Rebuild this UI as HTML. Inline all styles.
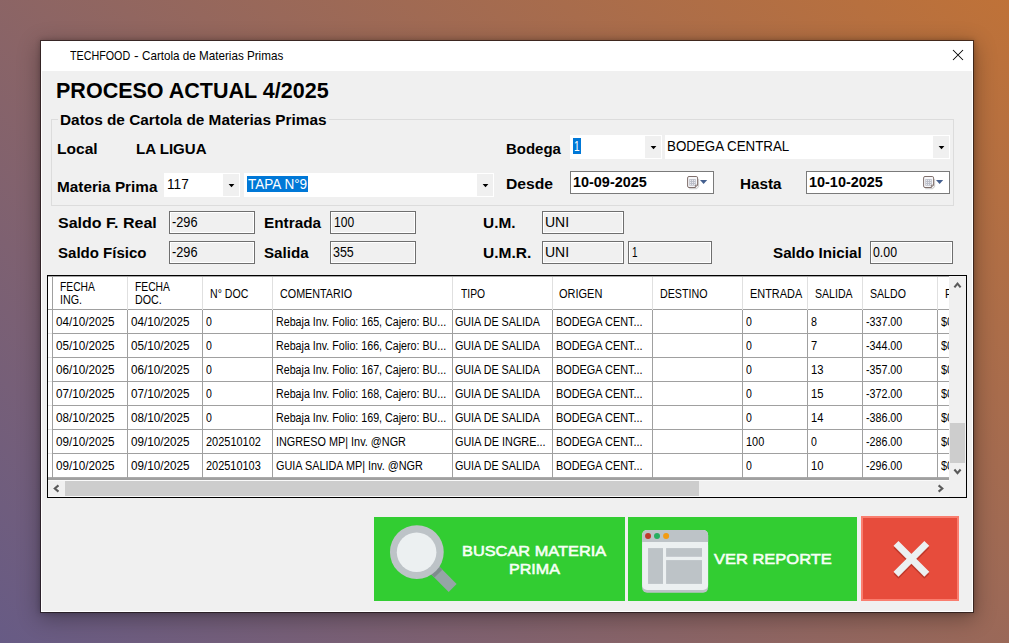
<!DOCTYPE html>
<html><head><meta charset="utf-8"><title>TECHFOOD - Cartola de Materias Primas</title>
<style>
html,body{margin:0;padding:0}
body{width:1009px;height:643px;overflow:hidden;position:relative;font-family:"Liberation Sans", sans-serif;
background:linear-gradient(42deg,#675b85,#bf7238)}
body>div,body>svg,body>span,div>span{position:absolute}
.t{position:absolute;white-space:nowrap;line-height:20px;transform-origin:0 50%;font-family:"Liberation Sans", sans-serif}
</style></head><body>
<div style="left:40px;top:40px;width:934px;height:573px;background:#fff;background-clip:padding-box;box-shadow:0 5px 20px 1px rgba(0,0,0,.30),0 0 5px rgba(0,0,0,.22);border:1px solid rgba(25,15,15,.64);box-sizing:border-box"></div>
<div style="left:42px;top:71px;width:930px;height:540px;background:#f0f0f0"></div>
<svg style="left:952px;top:49px" width="12" height="12" viewBox="0 0 12 12"><path d="M1 1L11 11M11 1L1 11" stroke="#000" stroke-width="1.02" fill="none"/></svg>
<div style="left:51px;top:119px;width:903px;height:87px;border:1px solid #dcdcdc;box-sizing:border-box"></div>
<div style="left:58px;top:112px;width:271px;height:16px;background:#f0f0f0"></div>
<div style="left:164px;top:173px;width:76px;height:24px;background:#fff"></div><div style="left:223px;top:174px;width:16px;height:22px;background:#f0f0f0"></div><svg style="left:223px;top:173px" width="16" height="24" viewBox="0 0 16 24"><path d="M5.6 10.9H11.4L8.5 14.3Z" fill="#000"/></svg>
<div style="left:244px;top:173px;width:250px;height:24px;background:#fff"></div><div style="left:477px;top:174px;width:16px;height:22px;background:#f0f0f0"></div><svg style="left:477px;top:173px" width="16" height="24" viewBox="0 0 16 24"><path d="M5.6 10.9H11.4L8.5 14.3Z" fill="#000"/></svg>
<div style="left:570px;top:135px;width:92px;height:24px;background:#fff"></div><div style="left:645px;top:136px;width:16px;height:22px;background:#f0f0f0"></div><svg style="left:645px;top:135px" width="16" height="24" viewBox="0 0 16 24"><path d="M5.6 10.9H11.4L8.5 14.3Z" fill="#000"/></svg>
<div style="left:665px;top:135px;width:285px;height:24px;background:#fff"></div><div style="left:933px;top:136px;width:16px;height:22px;background:#f0f0f0"></div><svg style="left:933px;top:135px" width="16" height="24" viewBox="0 0 16 24"><path d="M5.6 10.9H11.4L8.5 14.3Z" fill="#000"/></svg>
<div style="left:247px;top:176px;width:61px;height:16px;background:#0078d7"></div>
<div style="left:573px;top:138px;width:8px;height:16px;background:#0078d7"></div>
<div style="left:570px;top:171px;width:144px;height:23px;background:#fff;border:1px solid #7a7a7a;box-sizing:border-box"></div><svg style="left:687px;top:175px" width="22" height="15" viewBox="0 0 22 15">
<path d="M2.2 13.6H9.4L11.6 11.4V4" fill="none" stroke="#c4c4c4" stroke-width="1.1" opacity=".75"/>
<path d="M2 1.5H9.2Q10.6 1.5 10.6 2.9V10.2L8.4 12.5H2Q0.6 12.5 0.6 11.1V2.9Q0.6 1.5 2 1.5Z" fill="#f7f7f9" stroke="#7f6f6c" stroke-width="1"/>
<rect x="2.3" y="4.1" width="6.5" height="6.6" fill="#b9bcc6"/>
<g fill="#f4f4f8"><rect x="3.1" y="4.9" width="1" height="1"/><rect x="5.1" y="4.9" width="1" height="1"/><rect x="7.1" y="4.9" width="1" height="1"/>
<rect x="3.1" y="6.9" width="1" height="1"/><rect x="5.1" y="6.9" width="1" height="1"/><rect x="7.1" y="6.9" width="1" height="1"/>
<rect x="3.1" y="8.9" width="1" height="1"/><rect x="5.1" y="8.9" width="1" height="1"/><rect x="7.1" y="8.9" width="1" height="1"/></g>
<path d="M8.4 12.5V10.2H10.6" fill="#e8e8ee" stroke="#7f6f6c" stroke-width=".9"/>
<path d="M13 5H20.2L16.6 9.1Z" fill="#45608f"/></svg>
<div style="left:806px;top:171px;width:144px;height:23px;background:#fff;border:1px solid #7a7a7a;box-sizing:border-box"></div><svg style="left:923px;top:175px" width="22" height="15" viewBox="0 0 22 15">
<path d="M2.2 13.6H9.4L11.6 11.4V4" fill="none" stroke="#c4c4c4" stroke-width="1.1" opacity=".75"/>
<path d="M2 1.5H9.2Q10.6 1.5 10.6 2.9V10.2L8.4 12.5H2Q0.6 12.5 0.6 11.1V2.9Q0.6 1.5 2 1.5Z" fill="#f7f7f9" stroke="#7f6f6c" stroke-width="1"/>
<rect x="2.3" y="4.1" width="6.5" height="6.6" fill="#b9bcc6"/>
<g fill="#f4f4f8"><rect x="3.1" y="4.9" width="1" height="1"/><rect x="5.1" y="4.9" width="1" height="1"/><rect x="7.1" y="4.9" width="1" height="1"/>
<rect x="3.1" y="6.9" width="1" height="1"/><rect x="5.1" y="6.9" width="1" height="1"/><rect x="7.1" y="6.9" width="1" height="1"/>
<rect x="3.1" y="8.9" width="1" height="1"/><rect x="5.1" y="8.9" width="1" height="1"/><rect x="7.1" y="8.9" width="1" height="1"/></g>
<path d="M8.4 12.5V10.2H10.6" fill="#e8e8ee" stroke="#7f6f6c" stroke-width=".9"/>
<path d="M13 5H20.2L16.6 9.1Z" fill="#45608f"/></svg>
<div style="left:169px;top:211px;width:86px;height:23px;background:#f0f0f0;border:1px solid #6f6f6f;box-shadow:inset 0 0 0 1px #fff;box-sizing:border-box"></div>
<div style="left:169px;top:241px;width:86px;height:23px;background:#f0f0f0;border:1px solid #6f6f6f;box-shadow:inset 0 0 0 1px #fff;box-sizing:border-box"></div>
<div style="left:330px;top:211px;width:86px;height:23px;background:#f0f0f0;border:1px solid #6f6f6f;box-shadow:inset 0 0 0 1px #fff;box-sizing:border-box"></div>
<div style="left:330px;top:241px;width:86px;height:23px;background:#f0f0f0;border:1px solid #6f6f6f;box-shadow:inset 0 0 0 1px #fff;box-sizing:border-box"></div>
<div style="left:542px;top:211px;width:82px;height:23px;background:#f0f0f0;border:1px solid #6f6f6f;box-shadow:inset 0 0 0 1px #fff;box-sizing:border-box"></div>
<div style="left:542px;top:241px;width:82px;height:23px;background:#f0f0f0;border:1px solid #6f6f6f;box-shadow:inset 0 0 0 1px #fff;box-sizing:border-box"></div>
<div style="left:628px;top:241px;width:84px;height:23px;background:#f0f0f0;border:1px solid #6f6f6f;box-shadow:inset 0 0 0 1px #fff;box-sizing:border-box"></div>
<div style="left:870px;top:241px;width:83px;height:23px;background:#f0f0f0;border:1px solid #6f6f6f;box-shadow:inset 0 0 0 1px #fff;box-sizing:border-box"></div>
<div style="left:47px;top:275px;width:920px;height:223px;background:#fff;border:1px solid #000;box-sizing:border-box"></div>
<div style="left:48px;top:309px;width:901px;height:1px;background:#a0a0a0"></div>
<div style="left:52px;top:333px;width:897px;height:1px;background:#a0a0a0"></div>
<div style="left:48px;top:333px;width:4px;height:1px;background:#e3e3e3"></div>
<div style="left:52px;top:357px;width:897px;height:1px;background:#a0a0a0"></div>
<div style="left:48px;top:357px;width:4px;height:1px;background:#e3e3e3"></div>
<div style="left:52px;top:381px;width:897px;height:1px;background:#a0a0a0"></div>
<div style="left:48px;top:381px;width:4px;height:1px;background:#e3e3e3"></div>
<div style="left:52px;top:405px;width:897px;height:1px;background:#a0a0a0"></div>
<div style="left:48px;top:405px;width:4px;height:1px;background:#e3e3e3"></div>
<div style="left:52px;top:429px;width:897px;height:1px;background:#a0a0a0"></div>
<div style="left:48px;top:429px;width:4px;height:1px;background:#e3e3e3"></div>
<div style="left:52px;top:453px;width:897px;height:1px;background:#a0a0a0"></div>
<div style="left:48px;top:453px;width:4px;height:1px;background:#e3e3e3"></div>
<div style="left:52px;top:477px;width:897px;height:1px;background:#a0a0a0"></div>
<div style="left:48px;top:477px;width:4px;height:1px;background:#e3e3e3"></div>
<div style="left:48px;top:477px;width:901px;height:1px;background:#ababab"></div>
<div style="left:48px;top:478px;width:901px;height:2px;background:#a0a0a0"></div>
<div style="left:48px;top:276px;width:901px;height:1px;background:#a6a6a6"></div>
<div style="left:52px;top:277px;width:1px;height:33px;background:#a0a0a0"></div>
<div style="left:52px;top:310px;width:1px;height:168px;background:#a0a0a0"></div>
<div style="left:127px;top:277px;width:1px;height:33px;background:#e0e0e0"></div>
<div style="left:127px;top:310px;width:1px;height:168px;background:#a0a0a0"></div>
<div style="left:202px;top:277px;width:1px;height:33px;background:#e0e0e0"></div>
<div style="left:202px;top:310px;width:1px;height:168px;background:#a0a0a0"></div>
<div style="left:272px;top:277px;width:1px;height:33px;background:#e0e0e0"></div>
<div style="left:272px;top:310px;width:1px;height:168px;background:#a0a0a0"></div>
<div style="left:452px;top:277px;width:1px;height:33px;background:#e0e0e0"></div>
<div style="left:452px;top:310px;width:1px;height:168px;background:#a0a0a0"></div>
<div style="left:552px;top:277px;width:1px;height:33px;background:#e0e0e0"></div>
<div style="left:552px;top:310px;width:1px;height:168px;background:#a0a0a0"></div>
<div style="left:652px;top:277px;width:1px;height:33px;background:#e0e0e0"></div>
<div style="left:652px;top:310px;width:1px;height:168px;background:#a0a0a0"></div>
<div style="left:742px;top:277px;width:1px;height:33px;background:#e0e0e0"></div>
<div style="left:742px;top:310px;width:1px;height:168px;background:#a0a0a0"></div>
<div style="left:807px;top:277px;width:1px;height:33px;background:#e0e0e0"></div>
<div style="left:807px;top:310px;width:1px;height:168px;background:#a0a0a0"></div>
<div style="left:862px;top:277px;width:1px;height:33px;background:#e0e0e0"></div>
<div style="left:862px;top:310px;width:1px;height:168px;background:#a0a0a0"></div>
<div style="left:937px;top:277px;width:1px;height:33px;background:#e0e0e0"></div>
<div style="left:937px;top:310px;width:1px;height:168px;background:#a0a0a0"></div>
<div style="left:938px;top:276px;width:11px;height:202px;overflow:hidden"><span class="t" style="left:7px;top:7.67px;font-size:12.5px;transform:scaleX(0.856)">PRECIO</span><span class="t" style="left:3.4px;top:35.67px;font-size:12.5px;transform:scaleX(0.875)">$0.00</span><span class="t" style="left:3.4px;top:59.67px;font-size:12.5px;transform:scaleX(0.875)">$0.00</span><span class="t" style="left:3.4px;top:83.67px;font-size:12.5px;transform:scaleX(0.875)">$0.00</span><span class="t" style="left:3.4px;top:107.67px;font-size:12.5px;transform:scaleX(0.875)">$0.00</span><span class="t" style="left:3.4px;top:131.67px;font-size:12.5px;transform:scaleX(0.875)">$0.00</span><span class="t" style="left:3.4px;top:155.67px;font-size:12.5px;transform:scaleX(0.875)">$0.00</span><span class="t" style="left:3.4px;top:179.67px;font-size:12.5px;transform:scaleX(0.875)">$0.00</span></div>
<div style="left:949px;top:276px;width:17px;height:221px;background:#f0f0f0"></div>
<div style="left:48px;top:480px;width:901px;height:17px;background:#f0f0f0;border-top:1px solid #fafafa;border-bottom:1px solid #fafafa;box-sizing:border-box"></div>
<div style="left:950px;top:423px;width:15px;height:40px;background:#cdcdcd"></div>
<div style="left:65px;top:481px;width:634px;height:15px;background:#cdcdcd"></div>
<svg style="left:949px;top:276px" width="17" height="221" viewBox="949 276 17 221"><path d="M954.4 287.4L957.5 283.7L960.6 287.4M954.4 469.5L957.5 473.2L960.6 469.5" stroke="#5a5a5a" stroke-width="2.1" fill="none"/></svg>
<svg style="left:48px;top:480px" width="901" height="17" viewBox="48 480 901 17"><path d="M58.5 485.4L54.8 488.5L58.5 491.6M938.6 485.4L942.3 488.5L938.6 491.6" stroke="#5a5a5a" stroke-width="2.1" fill="none"/></svg>
<div style="left:374px;top:517px;width:251px;height:84px;background:#32cd32"></div>
<div style="left:628px;top:517px;width:229px;height:84px;background:#32cd32"></div>
<div style="left:861px;top:516px;width:98px;height:85px;background:#e74c3c;border:2px solid #fa7e6f;box-sizing:border-box"></div>
<svg style="left:386px;top:521px" width="76" height="76" viewBox="386 521 76 76">
<g transform="translate(436.05 571.25) rotate(45.3)"><rect x="-5" y="-5.6" width="28.6" height="11.2" fill="#95a5a6"/><rect x="-5" y="-5.6" width="8.4" height="11.2" fill="#7f8c8d"/></g>
<circle cx="416.85" cy="552.1" r="26.9" fill="#bdc3c7"/><circle cx="416.6" cy="552.2" r="19.8" fill="#ecf0f1"/></svg>
<svg style="left:641px;top:529px" width="68" height="65" viewBox="641 529 68 65">
<rect x="642.1" y="540" width="66" height="52.8" rx="5" fill="#bdc3c7"/>
<rect x="642.1" y="530" width="66" height="60" rx="5" fill="#ecf0f1"/>
<path d="M642.1 542V535a5 5 0 0 1 5-5h56a5 5 0 0 1 5 5V542Z" fill="#bdc3c7"/>
<circle cx="648.05" cy="535.9" r="3" fill="#c0392b"/><circle cx="657" cy="535.9" r="3" fill="#27ae60"/><circle cx="666.1" cy="535.9" r="3" fill="#f39c12"/>
<rect x="648.05" y="548.1" width="14.95" height="35.8" fill="#bdc3c7"/>
<rect x="666.1" y="548.1" width="35.9" height="8.7" fill="#bdc3c7"/>
<rect x="666.1" y="560.1" width="35.9" height="23.8" fill="#bdc3c7"/></svg>
<svg style="left:885px;top:533px" width="54" height="54" viewBox="885 533 54 54">
<path d="M896 543.4L926.8 574.2M926.8 543.4L896 574.2" stroke="#c0392b" stroke-width="7" fill="none" transform="translate(0,2.2)"/>
<path d="M896 543.4L926.8 574.2M926.8 543.4L896 574.2" stroke="#ecf0f1" stroke-width="7" fill="none"/></svg>
<span class="t" style="left:70.48px;top:45.90px;font-size:12.4px;font-weight:normal;color:#000;transform:scaleX(0.8652)">TECHFOOD</span>
<span class="t" style="left:134.39px;top:45.90px;font-size:12.4px;font-weight:normal;color:#000;transform:scaleX(1.1148)">-</span>
<span class="t" style="left:141.94px;top:45.90px;font-size:12.4px;font-weight:normal;color:#000;transform:scaleX(0.9408)">Cartola de Materias Primas</span>
<span class="t" style="left:55.65px;top:80.52px;font-size:21.6px;font-weight:bold;color:#000;transform:scaleX(0.9964)">PROCESO ACTUAL 4/2025</span>
<span class="t" style="left:60.14px;top:110.05px;font-size:14.0px;font-weight:bold;color:#000;transform:scaleX(1.0977)">Datos de Cartola de Materias Primas</span>
<span class="t" style="left:57.43px;top:139.15px;font-size:14.0px;font-weight:bold;color:#000;transform:scaleX(1.1101)">Local</span>
<span class="t" style="left:135.66px;top:139.15px;font-size:14.0px;font-weight:bold;color:#000;transform:scaleX(1.0760)">LA LIGUA</span>
<span class="t" style="left:505.76px;top:138.95px;font-size:14.0px;font-weight:bold;color:#000;transform:scaleX(1.0702)">Bodega</span>
<span class="t" style="left:57.44px;top:176.65px;font-size:14.0px;font-weight:bold;color:#000;transform:scaleX(1.0941)">Materia Prima</span>
<span class="t" style="left:505.72px;top:173.95px;font-size:14.0px;font-weight:bold;color:#000;transform:scaleX(1.1202)">Desde</span>
<span class="t" style="left:739.75px;top:173.95px;font-size:14.0px;font-weight:bold;color:#000;transform:scaleX(1.0898)">Hasta</span>
<span class="t" style="left:58.15px;top:213.15px;font-size:14.0px;font-weight:bold;color:#000;transform:scaleX(1.1440)">Saldo F. Real</span>
<span class="t" style="left:58.17px;top:243.15px;font-size:14.0px;font-weight:bold;color:#000;transform:scaleX(1.0735)">Saldo Físico</span>
<span class="t" style="left:263.54px;top:213.15px;font-size:14.0px;font-weight:bold;color:#000;transform:scaleX(1.0947)">Entrada</span>
<span class="t" style="left:264.26px;top:243.15px;font-size:14.0px;font-weight:bold;color:#000;transform:scaleX(1.0824)">Salida</span>
<span class="t" style="left:482.98px;top:213.15px;font-size:14.0px;font-weight:bold;color:#000;transform:scaleX(1.1009)">U.M.</span>
<span class="t" style="left:482.97px;top:243.15px;font-size:14.0px;font-weight:bold;color:#000;transform:scaleX(1.1101)">U.M.R.</span>
<span class="t" style="left:773.26px;top:243.15px;font-size:14.0px;font-weight:bold;color:#000;transform:scaleX(1.0850)">Saldo Inicial</span>
<span class="t" style="left:167.05px;top:174.15px;font-size:14.0px;font-weight:normal;color:#000;transform:scaleX(0.9724)">117</span>
<span class="t" style="left:248.09px;top:174.15px;font-size:14.0px;font-weight:normal;color:#fff;transform:scaleX(0.9675)">TAPA N°9</span>
<span class="t" style="left:573.57px;top:136.15px;font-size:14.0px;font-weight:normal;color:#fff;transform:scaleX(0.7251)">1</span>
<span class="t" style="left:667.46px;top:136.15px;font-size:14.0px;font-weight:normal;color:#000;transform:scaleX(0.9523)">BODEGA CENTRAL</span>
<span class="t" style="left:572.70px;top:172.45px;font-size:14.0px;font-weight:bold;color:#000;transform:scaleX(1.0300)">10-09-2025</span>
<span class="t" style="left:808.50px;top:172.45px;font-size:14.0px;font-weight:bold;color:#000;transform:scaleX(1.0314)">10-10-2025</span>
<span class="t" style="left:171.80px;top:212.35px;font-size:14.0px;font-weight:normal;color:#000;transform:scaleX(0.9106)">-296</span>
<span class="t" style="left:171.80px;top:242.35px;font-size:14.0px;font-weight:normal;color:#000;transform:scaleX(0.9106)">-296</span>
<span class="t" style="left:333.64px;top:212.35px;font-size:14.0px;font-weight:normal;color:#000;transform:scaleX(0.8629)">100</span>
<span class="t" style="left:333.21px;top:242.35px;font-size:14.0px;font-weight:normal;color:#000;transform:scaleX(0.8902)">355</span>
<span class="t" style="left:545.02px;top:212.35px;font-size:14.0px;font-weight:normal;color:#000;transform:scaleX(1.0013)">UNI</span>
<span class="t" style="left:545.02px;top:242.35px;font-size:14.0px;font-weight:normal;color:#000;transform:scaleX(1.0013)">UNI</span>
<span class="t" style="left:631.78px;top:242.35px;font-size:14.0px;font-weight:normal;color:#000;transform:scaleX(0.7094)">1</span>
<span class="t" style="left:873.01px;top:242.35px;font-size:14.0px;font-weight:normal;color:#000;transform:scaleX(0.8805)">0.00</span>
<span class="t" style="left:461.92px;top:540.94px;font-size:14.6px;font-weight:normal;color:#f6fff6;-webkit-text-stroke:.55px #f6fff6;transform:scaleX(1.1203)">BUSCAR MATERIA</span>
<span class="t" style="left:508.54px;top:558.74px;font-size:14.6px;font-weight:normal;color:#f6fff6;-webkit-text-stroke:.55px #f6fff6;transform:scaleX(1.1025)">PRIMA</span>
<span class="t" style="left:713.50px;top:549.44px;font-size:14.9px;font-weight:normal;color:#f6fff6;-webkit-text-stroke:.55px #f6fff6;transform:scaleX(1.1066)">VER REPORTE</span>
<span class="t" style="left:60.08px;top:276.67px;font-size:12.5px;font-weight:normal;color:#000;transform:scaleX(0.8241)">FECHA</span>
<span class="t" style="left:59.92px;top:290.17px;font-size:12.5px;font-weight:normal;color:#000;transform:scaleX(0.8560)">ING.</span>
<span class="t" style="left:135.08px;top:276.67px;font-size:12.5px;font-weight:normal;color:#000;transform:scaleX(0.8241)">FECHA</span>
<span class="t" style="left:135.04px;top:290.17px;font-size:12.5px;font-weight:normal;color:#000;transform:scaleX(0.8560)">DOC.</span>
<span class="t" style="left:210.05px;top:283.67px;font-size:12.5px;font-weight:normal;color:#000;transform:scaleX(0.8461)">N° DOC</span>
<span class="t" style="left:279.98px;top:283.67px;font-size:12.5px;font-weight:normal;color:#000;transform:scaleX(0.8605)">COMENTARIO</span>
<span class="t" style="left:460.99px;top:283.67px;font-size:12.5px;font-weight:normal;color:#000;transform:scaleX(0.8255)">TIPO</span>
<span class="t" style="left:559.42px;top:283.67px;font-size:12.5px;font-weight:normal;color:#000;transform:scaleX(0.8790)">ORIGEN</span>
<span class="t" style="left:660.04px;top:283.67px;font-size:12.5px;font-weight:normal;color:#000;transform:scaleX(0.8560)">DESTINO</span>
<span class="t" style="left:749.93px;top:283.67px;font-size:12.5px;font-weight:normal;color:#000;transform:scaleX(0.8733)">ENTRADA</span>
<span class="t" style="left:815.34px;top:283.67px;font-size:12.5px;font-weight:normal;color:#000;transform:scaleX(0.8446)">SALIDA</span>
<span class="t" style="left:870.23px;top:283.67px;font-size:12.5px;font-weight:normal;color:#000;transform:scaleX(0.8460)">SALDO</span>
<span class="t" style="left:55.88px;top:311.67px;font-size:12.5px;font-weight:normal;color:#000;transform:scaleX(0.9349)">04/10/2025</span>
<span class="t" style="left:130.88px;top:311.67px;font-size:12.5px;font-weight:normal;color:#000;transform:scaleX(0.9349)">04/10/2025</span>
<span class="t" style="left:205.82px;top:311.67px;font-size:12.5px;font-weight:normal;color:#000;transform:scaleX(0.8430)">0</span>
<span class="t" style="left:276.15px;top:311.67px;font-size:12.5px;font-weight:normal;color:#000;transform:scaleX(0.8541)">Rebaja Inv. Folio: 165, Cajero: BU...</span>
<span class="t" style="left:455.28px;top:311.67px;font-size:12.5px;font-weight:normal;color:#000;transform:scaleX(0.8598)">GUIA DE SALIDA</span>
<span class="t" style="left:555.73px;top:311.67px;font-size:12.5px;font-weight:normal;color:#000;transform:scaleX(0.8713)">BODEGA CENT...</span>
<span class="t" style="left:746.02px;top:311.67px;font-size:12.5px;font-weight:normal;color:#000;transform:scaleX(0.8430)">0</span>
<span class="t" style="left:811.07px;top:311.67px;font-size:12.5px;font-weight:normal;color:#000;transform:scaleX(0.8571)">8</span>
<span class="t" style="left:865.53px;top:311.67px;font-size:12.5px;font-weight:normal;color:#000;transform:scaleX(0.8552)">-337.00</span>
<span class="t" style="left:55.88px;top:335.67px;font-size:12.5px;font-weight:normal;color:#000;transform:scaleX(0.9349)">05/10/2025</span>
<span class="t" style="left:130.88px;top:335.67px;font-size:12.5px;font-weight:normal;color:#000;transform:scaleX(0.9349)">05/10/2025</span>
<span class="t" style="left:205.82px;top:335.67px;font-size:12.5px;font-weight:normal;color:#000;transform:scaleX(0.8430)">0</span>
<span class="t" style="left:276.15px;top:335.67px;font-size:12.5px;font-weight:normal;color:#000;transform:scaleX(0.8541)">Rebaja Inv. Folio: 166, Cajero: BU...</span>
<span class="t" style="left:455.28px;top:335.67px;font-size:12.5px;font-weight:normal;color:#000;transform:scaleX(0.8598)">GUIA DE SALIDA</span>
<span class="t" style="left:555.73px;top:335.67px;font-size:12.5px;font-weight:normal;color:#000;transform:scaleX(0.8713)">BODEGA CENT...</span>
<span class="t" style="left:746.02px;top:335.67px;font-size:12.5px;font-weight:normal;color:#000;transform:scaleX(0.8430)">0</span>
<span class="t" style="left:810.97px;top:335.67px;font-size:12.5px;font-weight:normal;color:#000;transform:scaleX(0.8870)">7</span>
<span class="t" style="left:865.53px;top:335.67px;font-size:12.5px;font-weight:normal;color:#000;transform:scaleX(0.8552)">-344.00</span>
<span class="t" style="left:55.88px;top:359.67px;font-size:12.5px;font-weight:normal;color:#000;transform:scaleX(0.9349)">06/10/2025</span>
<span class="t" style="left:130.88px;top:359.67px;font-size:12.5px;font-weight:normal;color:#000;transform:scaleX(0.9349)">06/10/2025</span>
<span class="t" style="left:205.82px;top:359.67px;font-size:12.5px;font-weight:normal;color:#000;transform:scaleX(0.8430)">0</span>
<span class="t" style="left:276.15px;top:359.67px;font-size:12.5px;font-weight:normal;color:#000;transform:scaleX(0.8541)">Rebaja Inv. Folio: 167, Cajero: BU...</span>
<span class="t" style="left:455.28px;top:359.67px;font-size:12.5px;font-weight:normal;color:#000;transform:scaleX(0.8598)">GUIA DE SALIDA</span>
<span class="t" style="left:555.73px;top:359.67px;font-size:12.5px;font-weight:normal;color:#000;transform:scaleX(0.8713)">BODEGA CENT...</span>
<span class="t" style="left:746.02px;top:359.67px;font-size:12.5px;font-weight:normal;color:#000;transform:scaleX(0.8430)">0</span>
<span class="t" style="left:810.65px;top:359.67px;font-size:12.5px;font-weight:normal;color:#000;transform:scaleX(0.8995)">13</span>
<span class="t" style="left:865.53px;top:359.67px;font-size:12.5px;font-weight:normal;color:#000;transform:scaleX(0.8552)">-357.00</span>
<span class="t" style="left:55.88px;top:383.67px;font-size:12.5px;font-weight:normal;color:#000;transform:scaleX(0.9349)">07/10/2025</span>
<span class="t" style="left:130.88px;top:383.67px;font-size:12.5px;font-weight:normal;color:#000;transform:scaleX(0.9349)">07/10/2025</span>
<span class="t" style="left:205.82px;top:383.67px;font-size:12.5px;font-weight:normal;color:#000;transform:scaleX(0.8430)">0</span>
<span class="t" style="left:276.15px;top:383.67px;font-size:12.5px;font-weight:normal;color:#000;transform:scaleX(0.8541)">Rebaja Inv. Folio: 168, Cajero: BU...</span>
<span class="t" style="left:455.28px;top:383.67px;font-size:12.5px;font-weight:normal;color:#000;transform:scaleX(0.8598)">GUIA DE SALIDA</span>
<span class="t" style="left:555.73px;top:383.67px;font-size:12.5px;font-weight:normal;color:#000;transform:scaleX(0.8713)">BODEGA CENT...</span>
<span class="t" style="left:746.02px;top:383.67px;font-size:12.5px;font-weight:normal;color:#000;transform:scaleX(0.8430)">0</span>
<span class="t" style="left:810.65px;top:383.67px;font-size:12.5px;font-weight:normal;color:#000;transform:scaleX(0.8995)">15</span>
<span class="t" style="left:865.53px;top:383.67px;font-size:12.5px;font-weight:normal;color:#000;transform:scaleX(0.8552)">-372.00</span>
<span class="t" style="left:55.88px;top:407.67px;font-size:12.5px;font-weight:normal;color:#000;transform:scaleX(0.9349)">08/10/2025</span>
<span class="t" style="left:130.88px;top:407.67px;font-size:12.5px;font-weight:normal;color:#000;transform:scaleX(0.9349)">08/10/2025</span>
<span class="t" style="left:205.82px;top:407.67px;font-size:12.5px;font-weight:normal;color:#000;transform:scaleX(0.8430)">0</span>
<span class="t" style="left:276.15px;top:407.67px;font-size:12.5px;font-weight:normal;color:#000;transform:scaleX(0.8541)">Rebaja Inv. Folio: 169, Cajero: BU...</span>
<span class="t" style="left:455.28px;top:407.67px;font-size:12.5px;font-weight:normal;color:#000;transform:scaleX(0.8598)">GUIA DE SALIDA</span>
<span class="t" style="left:555.73px;top:407.67px;font-size:12.5px;font-weight:normal;color:#000;transform:scaleX(0.8713)">BODEGA CENT...</span>
<span class="t" style="left:746.02px;top:407.67px;font-size:12.5px;font-weight:normal;color:#000;transform:scaleX(0.8430)">0</span>
<span class="t" style="left:810.66px;top:407.67px;font-size:12.5px;font-weight:normal;color:#000;transform:scaleX(0.8888)">14</span>
<span class="t" style="left:865.53px;top:407.67px;font-size:12.5px;font-weight:normal;color:#000;transform:scaleX(0.8552)">-386.00</span>
<span class="t" style="left:55.88px;top:431.67px;font-size:12.5px;font-weight:normal;color:#000;transform:scaleX(0.9349)">09/10/2025</span>
<span class="t" style="left:130.88px;top:431.67px;font-size:12.5px;font-weight:normal;color:#000;transform:scaleX(0.9349)">09/10/2025</span>
<span class="t" style="left:205.67px;top:431.67px;font-size:12.5px;font-weight:normal;color:#000;transform:scaleX(0.8767)">202510102</span>
<span class="t" style="left:276.00px;top:431.67px;font-size:12.5px;font-weight:normal;color:#000;transform:scaleX(0.8674)">INGRESO MP| Inv. @NGR</span>
<span class="t" style="left:455.28px;top:431.67px;font-size:12.5px;font-weight:normal;color:#000;transform:scaleX(0.8686)">GUIA DE INGRE...</span>
<span class="t" style="left:555.73px;top:431.67px;font-size:12.5px;font-weight:normal;color:#000;transform:scaleX(0.8713)">BODEGA CENT...</span>
<span class="t" style="left:745.57px;top:431.67px;font-size:12.5px;font-weight:normal;color:#000;transform:scaleX(0.8739)">100</span>
<span class="t" style="left:811.12px;top:431.67px;font-size:12.5px;font-weight:normal;color:#000;transform:scaleX(0.8430)">0</span>
<span class="t" style="left:865.53px;top:431.67px;font-size:12.5px;font-weight:normal;color:#000;transform:scaleX(0.8552)">-286.00</span>
<span class="t" style="left:55.88px;top:455.67px;font-size:12.5px;font-weight:normal;color:#000;transform:scaleX(0.9349)">09/10/2025</span>
<span class="t" style="left:130.88px;top:455.67px;font-size:12.5px;font-weight:normal;color:#000;transform:scaleX(0.9349)">09/10/2025</span>
<span class="t" style="left:205.67px;top:455.67px;font-size:12.5px;font-weight:normal;color:#000;transform:scaleX(0.8753)">202510103</span>
<span class="t" style="left:276.48px;top:455.67px;font-size:12.5px;font-weight:normal;color:#000;transform:scaleX(0.8677)">GUIA SALIDA MP| Inv. @NGR</span>
<span class="t" style="left:455.28px;top:455.67px;font-size:12.5px;font-weight:normal;color:#000;transform:scaleX(0.8598)">GUIA DE SALIDA</span>
<span class="t" style="left:555.73px;top:455.67px;font-size:12.5px;font-weight:normal;color:#000;transform:scaleX(0.8713)">BODEGA CENT...</span>
<span class="t" style="left:746.02px;top:455.67px;font-size:12.5px;font-weight:normal;color:#000;transform:scaleX(0.8430)">0</span>
<span class="t" style="left:810.65px;top:455.67px;font-size:12.5px;font-weight:normal;color:#000;transform:scaleX(0.8959)">10</span>
<span class="t" style="left:865.53px;top:455.67px;font-size:12.5px;font-weight:normal;color:#000;transform:scaleX(0.8552)">-296.00</span>
</body></html>
